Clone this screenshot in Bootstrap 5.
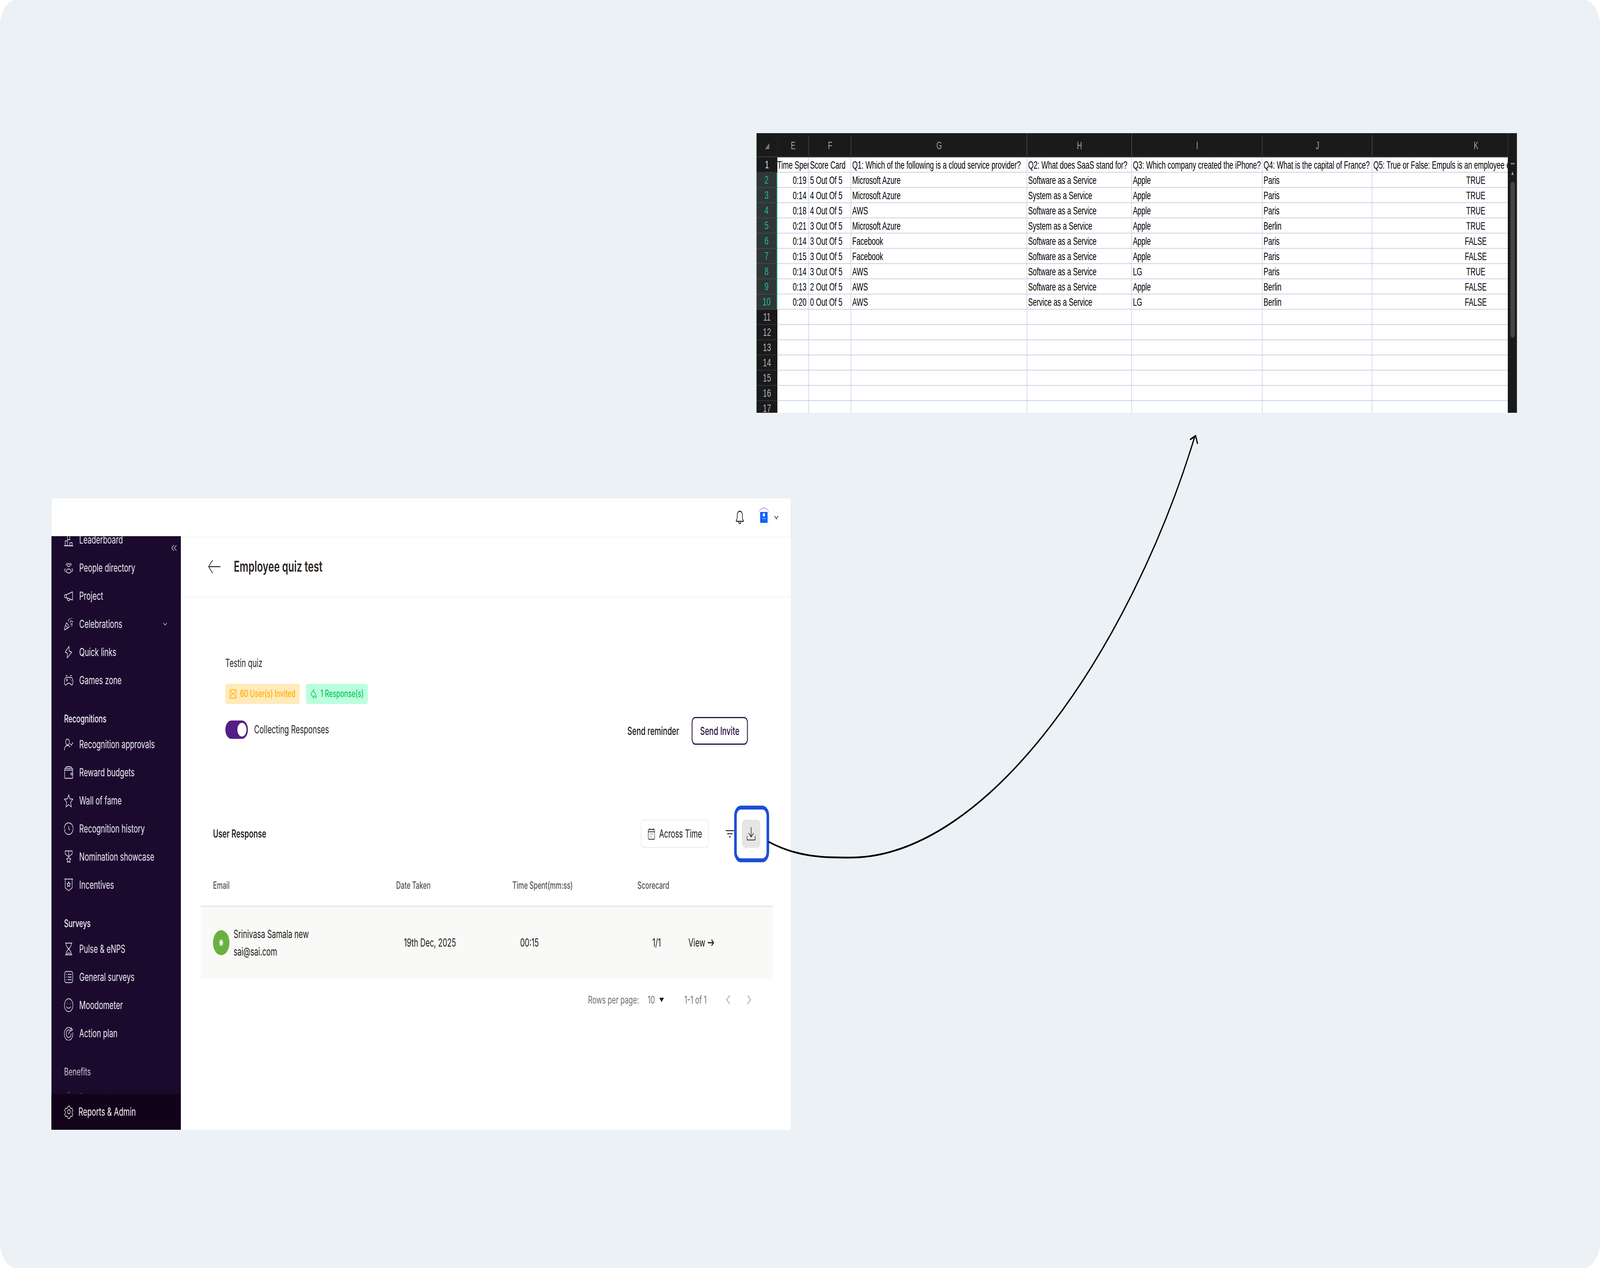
<!DOCTYPE html>
<html lang="en">
<head>
<meta charset="UTF-8">
<title>Employee quiz test</title>
<link href="https://cdn.jsdelivr.net/npm/bootstrap@5.3.0/dist/css/bootstrap.min.css" rel="stylesheet">
<style>
html, body { margin: 0; background: #fff; overflow: hidden; }
body { font-family: "Inter", "Liberation Sans", sans-serif; color: #1c1917; height: 3247px; }
.board { position: relative; width: 6220px; height: 3247px; background: #ecf1f5; border-radius: 66px; overflow: hidden; transform-origin: 0 0; }

/* spreadsheet window */
.sheet { position: absolute; left: 2941px; top: 341px; width: 2956px; height: 716px; background: #1a1a1a; overflow: hidden; font-family: "Liberation Sans", Arial, sans-serif; }
.sheet-grid { flex: 1 1 0; min-width: 0; overflow: hidden; }
.sheet table { width: 3200px; table-layout: fixed; border-collapse: separate; border-spacing: 0; background: #fff; }
.sheet thead th { height: 62px; background: #1a1a1a linear-gradient(#444, #444) right bottom / 2px 53px no-repeat; border-bottom: 3px solid #333; color: #a3a3a3; font-weight: 400; font-size: 27px; text-align: center; padding: 6px 0 0; }
.sheet thead th.corner { background: #1a1a1a; }
.sheet tbody th { height: 39px; background: #1a1a1a; border-bottom: 2px solid #333; color: #b5b5b5; font-weight: 400; font-size: 28px; text-align: center; padding: 0; line-height: 1; }
.sheet tbody th.sel { background: #2e3736; color: #1fb8a0; border-right: 3px solid #2aa88f; border-bottom-color: #3f4847; }
.sheet tbody th.first { color: #e2e2e2; }
.sheet td { height: 39px; border-bottom: 2px solid #c9d2e6; border-right: 2px solid #c3cbdf; color: #000; font-size: 27.300px; line-height: 1; padding: 2px 4px 0; white-space: nowrap; overflow: hidden; }
.sheet td.r { text-align: right; padding-right: 8px; }
.sheet td.c { text-align: center; }
.corner-mark { width: 17px; height: 16px; display: block; margin: 0 0 0 33px; }
.sheet-scroll { width: 35px; margin-top: 62px; flex: none; position: relative; background: #1a1a1a; border-left: 2px solid #111; }
.sheet-scroll i { position: absolute; display: block; }
.sb-minus { left: 8px; top: 14px; width: 17px; height: 4px; background: #777; border-radius: 2px; }
.sb-up { left: 11px; top: 36px; border-left: 5px solid transparent; border-right: 5px solid transparent; border-bottom: 9px solid #999; }
.sb-thumb { left: 8px; top: 62px; width: 17px; height: 400px; background: #444; border-radius: 9px; }

/* app window */
.app { position: absolute; left: 200px; top: 1276px; width: 2874px; height: 1617px; background: #fff; }
.topbar { height: 97px; padding-right: 48px; box-shadow: 0 2px 8px rgba(0,0,0,.05); position: relative; z-index: 2; }
.bell { width: 34px; height: 36px; margin-right: 52px; }
.avatar-ring { width: 49px; height: 49px; border-radius: 50%; border: 1px solid #e9ddf6; border-top: 2px solid #b48ae6; margin-right: 16px; }
.avatar-logo { width: 29px; height: 28px; background: #0f62fe; color: #fff; font-size: 5px; line-height: 1; padding-top: 3px; }
.avatar-logo i { display: block; width: 9px; height: 9px; border-radius: 50%; background: #fff; margin-bottom: 2px; }
.avatar-logo span { font-family: "Liberation Serif", serif; }
.chev { width: 16px; height: 10px; }

.sidebar { width: 503px; height: 1520px; background: #1b0a2e; color: #e9e5ee; flex: none; position: relative; }
.side-scroll { flex: 1 1 0; overflow: hidden; position: relative; }
.side-scroll::after { content: ""; position: absolute; left: 0; right: 0; bottom: 0; height: 90px; background: linear-gradient(rgba(27,10,46,0), rgba(27,10,46,.8)); }
.side-list { margin-top: -27px; }
.side-item { height: 72px; padding-left: 49px; gap: 23px; font-size: 28px; color: #e9e5ee; text-decoration: none; }
.side-item svg { width: 36px; height: 36px; flex: none; }
.side-item .caret { width: 16px; height: 10px; margin-left: auto; margin-right: 53px; }
.side-head { height: 60px; margin-top: 32px; padding-left: 49px; font-size: 26.500px; font-weight: 500; color: #f0edf4; line-height: 60px; }
.collapse-btn { position: absolute; left: 466px; top: 22px; width: 21px; height: 16px; z-index: 1; }
.side-foot { height: 92px; background: #12031a; padding-left: 50px; gap: 19px; font-size: 28.300px; color: #f2eff5; flex: none; }
.side-foot svg { width: 36px; height: 36px; }

.page-head { height: 157px; padding-left: 106px; gap: 52px; border-bottom: 2px solid #f4f4f4; }
.page-head svg { width: 48px; height: 36px; }
.page-head h1 { font-size: 37.700px; font-weight: 600; color: #292524; margin: 0; }
.quiz-info { padding: 148px 167px 0 173px; }
.quiz-name { font-size: 28.200px; line-height: 40px; color: #292524; margin-bottom: 33px; }
.pill { height: 52px; border-radius: 8px; padding: 0 16px; font-size: 25.200px; font-weight: 500; gap: 13px; line-height: 1; }
.pill svg { width: 28px; height: 28px; }
.pill-warn { background: #ffeabb; color: #ffb300; }
.pill-ok { background: #bbffdf; color: #0dc65a; }
.toggle-row { margin-top: 42px; padding-bottom: 15px; gap: 24px; font-size: 28.500px; color: #292524; }
.toggle-row .form-check-input { width: 88px; height: 47px; margin: 0; background-color: #541f85; border: 0; border-radius: 24px; float: none; }
.form-switch.toggle-row { padding-left: 0; min-height: 0; margin-bottom: 0; }
.send-reminder { font-size: 28.700px; font-weight: 500; color: #1c1917; margin-right: 49px; }
.btn-invite { width: 218px; height: 71px; padding: 0; border: 3px solid #2a1246; border-radius: 14px; background: #fff; color: #2a1246; font-size: 28.700px; font-weight: 500; box-shadow: 0 3px 6px rgba(0,0,0,.12); }

.resp-head { margin-top: 192px; padding: 0 118px 0 125px; height: 72px; }
.resp-head h2 { font-size: 28.400px; font-weight: 600; color: #292524; margin: 0; }
.btn-time { width: 264px; height: 72px; padding: 0 0 0 26px; gap: 16px; border: 2px solid #eceae8; border-radius: 12px; background: #fff; color: #1c1917; font-size: 28.300px; margin-right: 66px; }
.btn-time svg { width: 27px; height: 30px; }
.filter-ico { width: 33px; height: 20px; margin-right: 30px; }
.btn-down { width: 72px; height: 72px; padding: 0; background: #e7e5e4; border: 0; border-radius: 12px; }
.btn-down svg { width: 34px; height: 34px; }
.hilite { position: absolute; left: 2654px; top: 787px; width: 136px; height: 145px; border: 10px solid #1d4ed8; border-radius: 26px; z-index: 3; }

.resp-wrap { margin: 47px 70px 0 77px; }
.resp-table { table-layout: fixed; width: 2224px; margin: 0; }
.resp-table > thead > tr > th { height: 102px; padding: 0; font-size: 25.100px; font-weight: 500; color: #57534e; vertical-align: middle; border-bottom: 3px solid #e7e5e4; }
.resp-table > tbody > tr > td { height: 187px; padding: 0; background: #f9f9f7; font-size: 28.400px; color: #1c1917; vertical-align: middle; border: 0; }
.pl-email { padding-left: 48px !important; }
.pl-date { padding-left: 30px !important; }
.pl-time { padding-left: 30px !important; }
.pl-score { padding-left: 58px !important; }
.user-dot { width: 64px; height: 64px; border-radius: 50%; background: #6ab040; flex: none; }
.user-dot svg { width: 18px; height: 18px; }
.user-lines { line-height: 45px; }
.view-ico { width: 26px; height: 20px; margin-left: 9px; }
.pager { height: 46px; margin-top: 30px; padding-right: 83px; font-size: 26.900px; color: #78716c; }
.pager .rows-val { margin-left: 34px; }
.pager .tri { width: 0; height: 0; margin-left: 17px; border-left: 9px solid transparent; border-right: 9px solid transparent; border-top: 11px solid #1c1917; }
.pager .range { margin-left: 80px; margin-right: 75px; }
.pager svg { width: 17px; height: 24px; }
.pager svg + svg { margin-left: 65px; }

.flow-arrow { position: absolute; left: 0; top: 0; width: 6220px; height: 3247px; pointer-events: none; z-index: 4; }
</style>
</head>
<body>
<div class="board" id="board">

  <div class="sheet d-flex">
    <div class="sheet-grid">
    <table>
      <colgroup><col style="width:81px"><col style="width:123px"><col style="width:164px"><col style="width:684px"><col style="width:407px"><col style="width:508px"><col style="width:427px"><col style="width:806px"></colgroup>
      <thead><tr><th class="corner"><svg class="corner-mark" viewBox="0 0 17 16"><path d="M17 0v16H0z" fill="#777"/></svg></th><th>E</th><th>F</th><th>G</th><th>H</th><th>I</th><th>J</th><th>K</th></tr></thead>
      <tbody>
        <tr><th class="first">1</th><td class="c px-0">Time Spent</td><td>Score Card</td><td>Q1: Which of the following is a cloud service provider?</td><td>Q2: What does SaaS stand for?</td><td>Q3: Which company created the iPhone?</td><td>Q4: What is the capital of France?</td><td>Q5: True or False: Empuls is an employee engagement platform</td></tr>
        <tr><th class="sel">2</th><td class="r">0:19</td><td>5 Out Of 5</td><td>Microsoft Azure</td><td>Software as a Service</td><td>Apple</td><td>Paris</td><td class="c">TRUE</td></tr>
        <tr><th class="sel">3</th><td class="r">0:14</td><td>4 Out Of 5</td><td>Microsoft Azure</td><td>System as a Service</td><td>Apple</td><td>Paris</td><td class="c">TRUE</td></tr>
        <tr><th class="sel">4</th><td class="r">0:18</td><td>4 Out Of 5</td><td>AWS</td><td>Software as a Service</td><td>Apple</td><td>Paris</td><td class="c">TRUE</td></tr>
        <tr><th class="sel">5</th><td class="r">0:21</td><td>3 Out Of 5</td><td>Microsoft Azure</td><td>System as a Service</td><td>Apple</td><td>Berlin</td><td class="c">TRUE</td></tr>
        <tr><th class="sel">6</th><td class="r">0:14</td><td>3 Out Of 5</td><td>Facebook</td><td>Software as a Service</td><td>Apple</td><td>Paris</td><td class="c">FALSE</td></tr>
        <tr><th class="sel">7</th><td class="r">0:15</td><td>3 Out Of 5</td><td>Facebook</td><td>Software as a Service</td><td>Apple</td><td>Paris</td><td class="c">FALSE</td></tr>
        <tr><th class="sel">8</th><td class="r">0:14</td><td>3 Out Of 5</td><td>AWS</td><td>Software as a Service</td><td>LG</td><td>Paris</td><td class="c">TRUE</td></tr>
        <tr><th class="sel">9</th><td class="r">0:13</td><td>2 Out Of 5</td><td>AWS</td><td>Software as a Service</td><td>Apple</td><td>Berlin</td><td class="c">FALSE</td></tr>
        <tr><th class="sel">10</th><td class="r">0:20</td><td>0 Out Of 5</td><td>AWS</td><td>Service as a Service</td><td>LG</td><td>Berlin</td><td class="c">FALSE</td></tr>
        <tr><th>11</th><td></td><td></td><td></td><td></td><td></td><td></td><td></td></tr>
        <tr><th>12</th><td></td><td></td><td></td><td></td><td></td><td></td><td></td></tr>
        <tr><th>13</th><td></td><td></td><td></td><td></td><td></td><td></td><td></td></tr>
        <tr><th>14</th><td></td><td></td><td></td><td></td><td></td><td></td><td></td></tr>
        <tr><th>15</th><td></td><td></td><td></td><td></td><td></td><td></td><td></td></tr>
        <tr><th>16</th><td></td><td></td><td></td><td></td><td></td><td></td><td></td></tr>
        <tr><th>17</th><td></td><td></td><td></td><td></td><td></td><td></td><td></td></tr>
      </tbody>
    </table>
    </div>
    <div class="sheet-scroll"><i class="sb-minus"></i><i class="sb-up"></i><i class="sb-thumb"></i></div>
  </div>

  <div class="app d-flex flex-column">
    <div class="topbar d-flex align-items-center justify-content-end">
      <svg class="bell" viewBox="0 0 34 36" fill="none" stroke="#1c1917" stroke-width="2.400" stroke-linejoin="round" stroke-linecap="round"><path d="M17 2c-6 0-10 4.500-10 10v7c0 3-2 5-4 7v2h28v-2c-2-2-4-4-4-7v-7c0-5.500-4-10-10-10z"/><path d="M12.500 29c0 3 2 5 4.500 5s4.500-2 4.500-5"/></svg>
      <div class="avatar-ring d-flex align-items-center justify-content-center">
        <div class="avatar-logo d-flex flex-column align-items-center"><i></i><span>compass</span></div>
      </div>
      <svg class="chev" viewBox="0 0 16 10" fill="none" stroke="#292524" stroke-width="2"><path d="M1 1l7 8 7-8"/></svg>
    </div>
    <div class="d-flex flex-grow-1">
      <aside class="sidebar d-flex flex-column">
        <svg class="collapse-btn" viewBox="0 0 21 16" fill="none" stroke="#d9d4e0" stroke-width="1.600"><path d="M10 1L1 8l9 7M20 1l-9 7 9 7"/></svg>
        <div class="side-scroll">
          <div class="side-list d-flex flex-column">
            <a class="side-item d-flex align-items-center"><svg viewBox="0 0 24 24" fill="none" stroke="currentColor" stroke-width="1.300"><path d="M9 3h6v9H9zM3 14h6v8H3zM15 17h6v5h-6zM0 22.500h24"/></svg>Leaderboard</a>
            <a class="side-item d-flex align-items-center"><svg viewBox="0 0 24 24" fill="none" stroke="currentColor" stroke-width="1.300" stroke-linecap="round"><ellipse cx="12" cy="7.500" rx="3.200" ry="2.500"/><ellipse cx="12" cy="17.500" rx="6" ry="3.500"/><path d="M6 8c-1-1-.5-3 1.500-3.500M18 8c1-1 .5-3-1.500-3.500M4 18.500c-3-1-3-4-.5-5M20 18.500c3-1 3-4 .5-5"/></svg>People directory</a>
            <a class="side-item d-flex align-items-center"><svg viewBox="0 0 24 24" fill="none" stroke="currentColor" stroke-width="1.300" stroke-linejoin="round"><path d="M6 10l16-5v14L6 15z"/><path d="M6 10H3.500a2.500 2.500 0 000 5H6M8 16c0 3 2 4 4 4s3-1 3-2"/></svg>Project</a>
            <a class="side-item d-flex align-items-center"><svg viewBox="0 0 24 24" fill="none" stroke="currentColor" stroke-width="1.300" stroke-linejoin="round" stroke-linecap="round"><path d="M1 20l5-10c3 1 6 4 7 7l-11 5c-1 0-1.500-1-1-2zM4 14c2 1 4 3 5 5"/><path d="M11 7l1-3M15 4l1-2M15 9l4-3M20 2v.5M17 12h5M20 8h3M19 15h2"/></svg>Celebrations<svg class="caret" viewBox="0 0 16 10" fill="none" stroke="currentColor" stroke-width="1.600"><path d="M1 2l7 6 7-6"/></svg></a>
            <a class="side-item d-flex align-items-center"><svg viewBox="0 0 24 24" fill="none" stroke="currentColor" stroke-width="1.300" stroke-linejoin="round"><path d="M13 2L3 12l6 2-1 8 12-10-7-2z"/></svg>Quick links</a>
            <a class="side-item d-flex align-items-center"><svg viewBox="0 0 24 24" fill="none" stroke="currentColor" stroke-width="1.300" stroke-linecap="round"><path d="M6 7h12c3 0 5 4 5 8 0 3-1 5-3 5-3 0-3-3-6-3h-4c-3 0-3 3-6 3-2 0-3-2-3-5 0-4 2-8 5-8z"/><path d="M6 10l3 3M9 10l-3 3M16 10h.5M19 13h.5M5 4h3M16 4h3"/></svg>Games zone</a>

            <div class="side-head">Recognitions</div>
            <a class="side-item d-flex align-items-center"><svg viewBox="0 0 24 24" fill="none" stroke="currentColor" stroke-width="1.300" stroke-linecap="round"><circle cx="9" cy="8" r="5"/><path d="M0.500 22c.5-5 4-8 8.500-8 2.500 0 4.500 1 6 2.500M16 11l2.500 2.500L23.500 9"/></svg>Recognition approvals</a>
            <a class="side-item d-flex align-items-center"><svg viewBox="0 0 24 24" fill="none" stroke="currentColor" stroke-width="1.300" stroke-linejoin="round"><path d="M3 5h18a1.500 1.500 0 011.500 1.500v14A1.500 1.500 0 0121 22H3a1.500 1.500 0 01-1.500-1.500v-14A1.500 1.500 0 013 5z"/><path d="M4 5c1-2 3-3 5-3h6c2 0 4 1 5 3M1.500 8h21M23 13h-4a1.500 1.500 0 000 3h4"/></svg>Reward budgets</a>
            <a class="side-item d-flex align-items-center"><svg viewBox="0 0 24 24" fill="none" stroke="currentColor" stroke-width="1.300" stroke-linejoin="round"><path d="M12 2l3 7 8 .5-6 5.500 2 8-7-4-7 4 2-8-6-5.500L9 9z"/></svg>Wall of fame</a>
            <a class="side-item d-flex align-items-center"><svg viewBox="0 0 24 24" fill="none" stroke="currentColor" stroke-width="1.300" stroke-linecap="round"><path d="M1 9A11.500 10 0 1 1 1 15M1 15l2-1M1 9l0 3M12 8v4.500l3 1.500"/></svg>Recognition history</a>
            <a class="side-item d-flex align-items-center"><svg viewBox="0 0 24 24" fill="none" stroke="currentColor" stroke-width="1.300" stroke-linejoin="round"><path d="M3 2h18v5l-7 4h-4L3 7zM12 2v9"/><path d="M12 12l2 3 3.500.5-2.500 2.500.5 3.500-3.500-1.500-3.500 1.500.5-3.500L6.500 15.500 10 15z"/></svg>Nomination showcase</a>
            <a class="side-item d-flex align-items-center"><svg viewBox="0 0 24 24" fill="none" stroke="currentColor" stroke-width="1.300" stroke-linejoin="round"><path d="M1 2h22M3 2v15l9 5 9-5V2"/><path d="M12 6.500l1.500 3 3 .3-2.200 2 .7 3-3-1.500-3 1.500.7-3-2.200-2 3-.3z"/></svg>Incentives</a>

            <div class="side-head">Surveys</div>
            <a class="side-item d-flex align-items-center"><svg viewBox="0 0 24 24" fill="none" stroke="currentColor" stroke-width="1.300" stroke-linejoin="round"><path d="M3 2h18M3 22h18M5 2c0 5 3 7 7 10 4-3 7-5 7-10M5 22c0-5 3-7 7-10 4 3 7 5 7 10M7 20.500c2-2 8-2 10 0"/></svg>Pulse &amp; eNPS</a>
            <a class="side-item d-flex align-items-center"><svg viewBox="0 0 24 24" fill="none" stroke="currentColor" stroke-width="1.300" stroke-linecap="round"><rect x="1.500" y="2.500" width="21" height="19" rx="4"/><path d="M10 7.500h9M10 12h9M10 16.500h9M5.500 7.500h.5M5.500 12h.5M5.500 16.500h.5"/></svg>General surveys</a>
            <a class="side-item d-flex align-items-center"><svg viewBox="0 0 24 24" fill="none" stroke="currentColor" stroke-width="1.300" stroke-linecap="round"><circle cx="12" cy="12" r="11"/><path d="M8 9v.5M16 9v.5M6.500 14.500c2.500 3.500 8.500 3.500 11 0"/></svg>Moodometer</a>
            <a class="side-item d-flex align-items-center"><svg viewBox="0 0 24 24" fill="none" stroke="currentColor" stroke-width="1.300" stroke-linecap="round" stroke-linejoin="round"><path d="M17 3.500A11 11 0 1 0 22.500 11M14 6.500a6.500 6.500 0 1 0 4.500 6"/><path d="M11.500 13l5-5.500M16.500 7.500l.5-3.500 2-1.500.5 2.500 2.500.5-2 2z"/></svg>Action plan</a>

            <div class="side-head">Benefits</div>
            <a class="side-item d-flex align-items-center"><svg viewBox="0 0 24 24" fill="none" stroke="currentColor" stroke-width="1.300"><circle cx="12" cy="7" r="4"/><path d="M4 22c0-5 3-8 8-8s8 3 8 8"/></svg>Payments</a>
          </div>
        </div>
        <div class="side-foot d-flex align-items-center"><svg viewBox="0 0 24 24" fill="none" stroke="currentColor" stroke-width="1.300" stroke-linejoin="round"><circle cx="12" cy="12" r="3.500"/><path d="M9.500 1.500h5l.7 3 2.700 1.500 3-.9 2.500 4.300-2.300 2.100v3l2.300 2.100-2.500 4.300-3-.9-2.700 1.500-.7 3h-5l-.7-3-2.700-1.500-3 .9L-.4 16.600l2.300-2.100v-3L-.4 9.400 2.100 5.100l3 .9 2.700-1.500z" transform="translate(1.100 1.100) scale(.91)"/></svg>Reports &amp; Admin</div>
      </aside>

      <main class="flex-grow-1">
        <div class="page-head d-flex align-items-center">
          <svg viewBox="0 0 48 36" fill="none" stroke="#292524" stroke-width="2.400" stroke-linecap="round" stroke-linejoin="round"><path d="M47 18H2M17 2L2 18l15 16"/></svg>
          <h1>Employee quiz test</h1>
        </div>

        <section class="quiz-info d-flex justify-content-between align-items-end">
          <div>
            <div class="quiz-name">Testin quiz</div>
            <div class="d-flex gap-4">
              <span class="pill pill-warn d-inline-flex align-items-center"><svg viewBox="0 0 28 28" fill="none" stroke="currentColor" stroke-width="2"><rect x="2" y="3" width="24" height="22" rx="3"/><path d="M3 5l11 10L25 5M3 23l8-10M25 23l-8-10"/></svg>60 User(s) Invited</span>
              <span class="pill pill-ok d-inline-flex align-items-center"><svg viewBox="0 0 28 28" fill="none" stroke="currentColor" stroke-width="2" stroke-linejoin="round"><path d="M15 3L3 14l12 11v-6c4 0 7 1 9 5 1-7-2-13-9-14z"/></svg>1 Response(s)</span>
            </div>
            <div class="form-check form-switch toggle-row d-flex align-items-center">
              <input class="form-check-input" type="checkbox" role="switch" id="collecting" checked>
              <label class="form-check-label" for="collecting">Collecting Responses</label>
            </div>
          </div>
          <div class="d-flex align-items-center">
            <span class="send-reminder">Send reminder</span>
            <button class="btn btn-invite" type="button">Send Invite</button>
          </div>
        </section>

        <section class="resp-head d-flex align-items-center">
          <h2 class="me-auto">User Response</h2>
          <button class="btn btn-time d-flex align-items-center" type="button"><svg viewBox="0 0 27 30" fill="none" stroke="#292524" stroke-width="1.800" stroke-linecap="round"><rect x="1" y="4" width="25" height="25" rx="3"/><path d="M1 10h25M7 1v5M20 1v5M8 16h.5M13 16h.5M18 16h.5M8 22h.5M13 22h.5"/></svg>Across Time</button>
          <svg class="filter-ico" viewBox="0 0 33 20" fill="none" stroke="#292524" stroke-width="2.400"><path d="M0 2h33M6 10h21M13 18h7"/></svg>
          <button class="btn btn-down d-flex align-items-center justify-content-center" type="button"><svg viewBox="0 0 34 34" fill="none" stroke="#292524" stroke-width="2.200" stroke-linecap="round" stroke-linejoin="round"><path d="M17 1v23M8 16l9 9 9-9M1 23v7a3 3 0 003 3h26a3 3 0 003-3v-7"/></svg></button>
        </section>

        <div class="resp-wrap">
          <table class="table resp-table">
            <colgroup><col style="width:760px"><col style="width:452px"><col style="width:486px"><col style="width:198px"><col style="width:328px"></colgroup>
            <thead><tr><th class="pl-email">Email</th><th>Date Taken</th><th>Time Spent(mm:ss)</th><th>Scorecard</th><th></th></tr></thead>
            <tbody><tr>
              <td class="pl-email"><div class="d-flex align-items-center gap-3">
                <span class="user-dot d-flex align-items-center justify-content-center"><svg viewBox="0 0 18 18" stroke="#fff" stroke-width="2.600" stroke-linecap="round"><path d="M9 1v16M1 9h16M3.500 3.500l11 11M14.500 3.500l-11 11"/></svg></span>
                <div class="user-lines"><div>Srinivasa Samala new</div><div>sai@sai.com</div></div>
              </div></td>
              <td class="pl-date">19th Dec, 2025</td>
              <td class="pl-time">00:15</td>
              <td class="pl-score">1/1</td>
              <td><span class="d-inline-flex align-items-center">View<svg class="view-ico" viewBox="0 0 26 20" fill="none" stroke="#1c1917" stroke-width="3"><path d="M0 10h23M15 2l8 8-8 8"/></svg></span></td>
            </tr></tbody>
          </table>
          <div class="pager d-flex align-items-center justify-content-end">
            <span>Rows per page:</span><span class="rows-val">10</span><span class="tri"></span><span class="range">1-1 of 1</span>
            <svg viewBox="0 0 17 24" fill="none" stroke="#a8a29e" stroke-width="2.400"><path d="M15 1L3 12l12 11"/></svg>
            <svg viewBox="0 0 17 24" fill="none" stroke="#a8a29e" stroke-width="2.400"><path d="M2 1l12 11L2 23"/></svg>
          </div>
        </div>
      </main>
    </div>
    <div class="hilite"></div>
  </div>

  <svg class="flow-arrow" viewBox="0 0 6220 3247" fill="none" stroke="#000" stroke-width="4.500" stroke-linecap="round" stroke-linejoin="round">
    <path d="M2989 2156C3100 2195 3200 2196 3304 2196C3850 2196 4400 1650 4645 1117"/>
    <path d="M4628 1125L4648 1116L4655 1135"/>
  </svg>
</div>
<script src="https://cdn.jsdelivr.net/npm/bootstrap@5.3.0/dist/js/bootstrap.bundle.min.js"></script>
<script>
  // the canvas is 6220 wide, fit it into whatever width the window really has
  var fit = document.documentElement.clientWidth / 6220;
  document.getElementById('board').style.transform = 'scaleX(' + fit + ')';
</script>
</body>
</html>
